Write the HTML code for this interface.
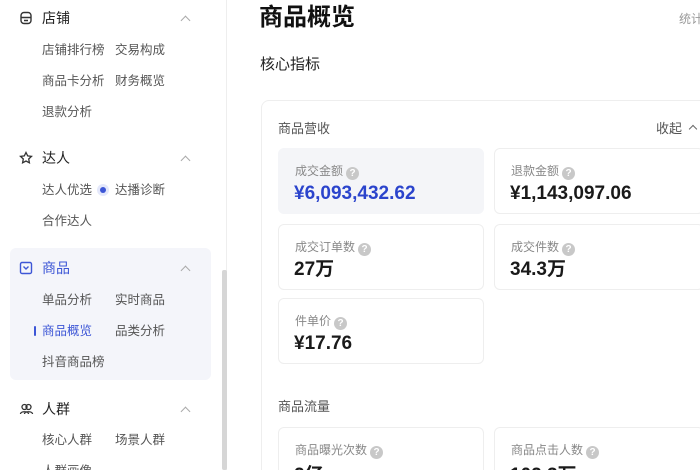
<!DOCTYPE html>
<html style="width:700px;height:470px;overflow:hidden"><head><meta charset="utf-8"><style>
*{margin:0;padding:0;box-sizing:border-box}
body{width:700px;height:470px;overflow:hidden;background:#fff;position:relative;font-family:"Liberation Sans","Noto Sans CJK SC",sans-serif;color:#333}
.a{position:absolute;white-space:nowrap}
.gh{font-size:14px;color:#222;line-height:20px}
.it{font-size:12.5px;color:#555;line-height:18px}
.chev{position:absolute;width:7px;height:7px;border-left:1.3px solid #aaa;border-top:1.3px solid #aaa;transform:rotate(45deg)}
.card{position:absolute;border:1px solid #eee;border-radius:6px;background:#fff}
.lab{position:absolute;left:16px;top:14px;font-size:12px;color:#888;line-height:16px}
.q{display:inline-block;width:13px;height:13px;border-radius:50%;background:#c8c8c8;color:#fff;font-size:10px;line-height:13px;text-align:center;vertical-align:-1px;margin-left:3px;font-weight:bold}
.val{position:absolute;left:15px;top:33px;font-size:19px;font-weight:bold;color:#1a1a1a;line-height:24px}
</style></head><body>
<div class="a" style="left:10px;top:248px;width:201px;height:132px;background:#f4f5fa;border-radius:6px"></div>
<div class="a" style="left:226px;top:0;width:1px;height:470px;background:#eee"></div>
<div class="a" style="left:222px;top:270px;width:5px;height:200px;background:#d6d6d6;border-radius:2px"></div>

<svg class="a" style="left:19px;top:11px" width="14" height="14" viewBox="0 0 14 14" fill="none" stroke="#333" stroke-width="1.4"><rect x="2" y="1.5" width="10" height="11" rx="3"/><path d="M2 6.5h10M5 9.5h4"/></svg>
<div class="a gh" style="left:42px;top:8px">店铺</div>
<div class="chev" style="left:182px;top:17px"></div>
<div class="a it" style="left:42px;top:41px">店铺排行榜</div><div class="a it" style="left:115px;top:41px">交易构成</div>
<div class="a it" style="left:42px;top:72px">商品卡分析</div><div class="a it" style="left:115px;top:72px">财务概览</div>
<div class="a it" style="left:42px;top:103px">退款分析</div>

<svg class="a" style="left:19px;top:151px" width="14" height="14" viewBox="0 0 14 14" fill="none" stroke="#333" stroke-width="1.3"><path d="M7 1.5l1.7 3.4 3.8.5-2.8 2.6.7 3.8L7 10l-3.4 1.8.7-3.8L1.5 5.4l3.8-.5z"/></svg>
<div class="a gh" style="left:42px;top:148px">达人</div>
<div class="chev" style="left:182px;top:157px"></div>
<div class="a it" style="left:42px;top:181px">达人优选</div>
<div class="a" style="left:97px;top:184px;width:12px;height:12px;border-radius:50%;background:#e4e8fb"></div>
<div class="a" style="left:100px;top:187px;width:6px;height:6px;border-radius:50%;background:#3d56d6"></div>
<div class="a it" style="left:115px;top:181px">达播诊断</div>
<div class="a it" style="left:42px;top:212px">合作达人</div>

<svg class="a" style="left:19px;top:261px" width="14" height="14" viewBox="0 0 14 14" fill="none" stroke="#3d56d6" stroke-width="1.4"><rect x="1.5" y="1.5" width="11" height="11" rx="1.5"/><path d="M4.5 5.5L7 8l2.5-2.5"/></svg>
<div class="a gh" style="left:42px;top:258px;color:#3d56d6">商品</div>
<div class="chev" style="left:182px;top:267px"></div>
<div class="a it" style="left:42px;top:291px">单品分析</div><div class="a it" style="left:115px;top:291px">实时商品</div>
<div class="a" style="left:34px;top:326px;width:2px;height:10px;background:#3d56d6;border-radius:1px"></div>
<div class="a it" style="left:42px;top:322px;color:#3d56d6">商品概览</div><div class="a it" style="left:115px;top:322px">品类分析</div>
<div class="a it" style="left:42px;top:353px">抖音商品榜</div>

<svg class="a" style="left:19px;top:402px" width="15" height="14" viewBox="0 0 15 14" fill="none" stroke="#333" stroke-width="1.3"><circle cx="5.5" cy="5" r="2.5"/><circle cx="9.5" cy="5" r="2.5"/><path d="M1.5 12c0-3 8-3 8 0M5.5 12c0-3 8-3 8 0"/></svg>
<div class="a gh" style="left:42px;top:399px">人群</div>
<div class="chev" style="left:182px;top:408px"></div>
<div class="a it" style="left:42px;top:431px">核心人群</div><div class="a it" style="left:115px;top:431px">场景人群</div>
<div class="a it" style="left:42px;top:462px">人群画像</div>

<div class="a" style="left:259px;top:3px;font-size:24px;font-weight:bold;color:#111;line-height:30px">商品概览</div>
<div class="a" style="left:679px;top:10px;font-size:12px;color:#999">统计</div>
<div class="a" style="left:260px;top:55px;font-size:15px;color:#222;line-height:20px">核心指标</div>
<div class="a" style="left:261px;top:100px;width:460px;height:400px;border:1px solid #eee;border-radius:8px"></div>
<div class="a" style="left:278px;top:120px;font-size:13px;color:#555;line-height:18px">商品营收</div>
<div class="a" style="left:656px;top:120px;font-size:13px;color:#555;line-height:18px">收起</div>
<div class="chev" style="left:690px;top:126px;width:6px;height:6px;border-color:#666"></div>

<div class="card" style="left:278px;top:148px;width:206px;height:66px;background:#f4f5f8;border-color:#f4f5f8"><div class="lab">成交金额<span class="q">?</span></div><div class="val" style="color:#2b44cc">¥6,093,432.62</div></div>
<div class="card" style="left:494px;top:148px;width:210px;height:66px"><div class="lab">退款金额<span class="q">?</span></div><div class="val">¥1,143,097.06</div></div>
<div class="card" style="left:278px;top:224px;width:206px;height:66px"><div class="lab">成交订单数<span class="q">?</span></div><div class="val">27万</div></div>
<div class="card" style="left:494px;top:224px;width:210px;height:66px"><div class="lab">成交件数<span class="q">?</span></div><div class="val">34.3万</div></div>
<div class="card" style="left:278px;top:298px;width:206px;height:66px"><div class="lab">件单价<span class="q">?</span></div><div class="val">¥17.76</div></div>

<div class="a" style="left:278px;top:398px;font-size:13px;color:#555;line-height:18px">商品流量</div>
<div class="card" style="left:278px;top:427px;width:206px;height:66px"><div class="lab">商品曝光次数<span class="q">?</span></div><div class="val" style="top:36px">2亿</div></div>
<div class="card" style="left:494px;top:427px;width:210px;height:66px"><div class="lab">商品点击人数<span class="q">?</span></div><div class="val" style="top:36px">102.3万</div></div>
</body></html>
